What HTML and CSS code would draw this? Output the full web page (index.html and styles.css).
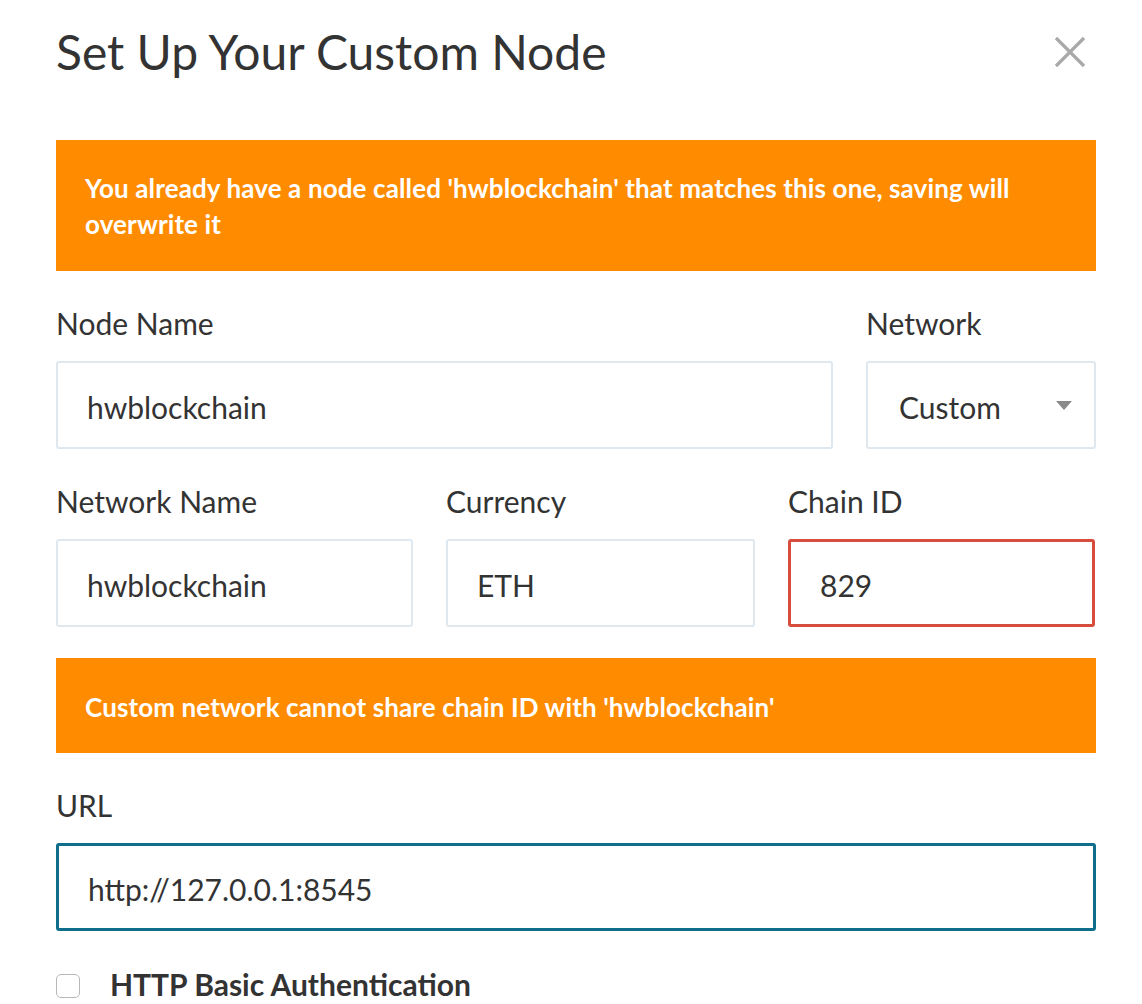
FILE: index.html
```html
<!DOCTYPE html>
<html>
<head>
<meta charset="utf-8">
<link rel="stylesheet" href="styles.css">
</head>
<body>
<div class="modal">
  <div class="header">
    <h1 class="title">Set Up Your Custom Node</h1>
    <button class="close" aria-label="Close">
      <svg width="32" height="32" viewBox="0 0 32 32"><path d="M2 2L30 30M30 2L2 30" stroke="#a9a9a9" stroke-width="3.2" fill="none"/></svg>
    </button>
  </div>
  <div class="warning warning-top">You already have a node called 'hwblockchain' that matches this one, saving will overwrite it</div>

  <div class="row row-1">
    <div class="field">
      <label class="label">Node Name</label>
      <div class="input">hwblockchain</div>
    </div>
    <div class="field">
      <label class="label">Network</label>
      <div class="input select">Custom<span class="caret"></span></div>
    </div>
  </div>

  <div class="row row-2">
    <div class="field">
      <label class="label">Network Name</label>
      <div class="input">hwblockchain</div>
    </div>
    <div class="field">
      <label class="label">Currency</label>
      <div class="input">ETH</div>
    </div>
    <div class="field">
      <label class="label">Chain ID</label>
      <div class="input invalid">829</div>
    </div>
  </div>

  <div class="warning warning-mid">Custom network cannot share chain ID with 'hwblockchain'</div>

  <div class="field url-field">
    <label class="label">URL</label>
    <div class="input focused">http://127.0.0.1:8545</div>
  </div>

  <div class="check-row">
    <span class="checkbox"></span>
    <span class="check-label">HTTP Basic Authentication</span>
  </div>
</div>
</body>
</html>
```
FILE: styles.css
```css
* { box-sizing: border-box; }
html, body { margin: 0; padding: 0; background: #fff; }
body { font-family: "Lato", "Liberation Sans", sans-serif; color: #333; }
.modal { width: 1096px; padding-left: 56px; }
.header { display: flex; justify-content: space-between; align-items: flex-start; height: 140px; }
.title { margin: 0; padding-top: 22px; font-size: 48px; font-weight: 400; line-height: 60px; color: #333; }
.close { border: 0; background: none; padding: 0; margin: 36px 10px 0 0; width: 32px; height: 32px; }
.close svg { display: block; }
.warning { background: #ff8c00; color: #fff; font-weight: 700; font-size: 26px; letter-spacing: 0.12px; line-height: 36px; padding-left: 29px; padding-right: 29px; }
.warning-top { padding-top: 30px; padding-bottom: 29px; }
.warning-mid { padding-top: 31px; padding-bottom: 28px; margin-top: 31px; }
.row { display: flex; gap: 33px; margin-top: 34px; }
.row-1 .field:first-child { width: 777px; }
.row-1 .field:last-child { width: 230px; }
.row-2 .field:nth-child(1) { width: 357px; }
.row-2 .field:nth-child(2) { width: 309px; }
.row-2 .field:nth-child(3) { width: 307px; }
.label { display: block; font-size: 30px; line-height: 36px; margin-bottom: 20px; color: #333; }
.input { height: 88px; border: 2px solid #e0e8ef; border-radius: 3px; padding-left: 29px; padding-top: 3px; font-size: 30px; display: flex; align-items: center; color: #333; }
.select { justify-content: space-between; padding-right: 22px; padding-left: 31px; }
.caret { width: 0; height: 0; border-left: 8px solid transparent; border-right: 8px solid transparent; border-top: 9px solid #8a8a8a; margin-top: -2px; }
.invalid { border: 3px solid #d64c3d; padding-left: 29px; }
.focused { border: 3px solid #0f6f8b; height: 88px; padding-left: 29px; }
.url-field { margin-top: 34px; }
.check-row { display: flex; align-items: center; margin-top: 35px; }
.checkbox { width: 24px; height: 24px; border: 1px solid #b8b8b8; border-radius: 5px; background: #fff; margin-top: 4px; }
.check-label { font-weight: 700; font-size: 30px; line-height: 36px; margin-left: 30px; color: #333; }
```
